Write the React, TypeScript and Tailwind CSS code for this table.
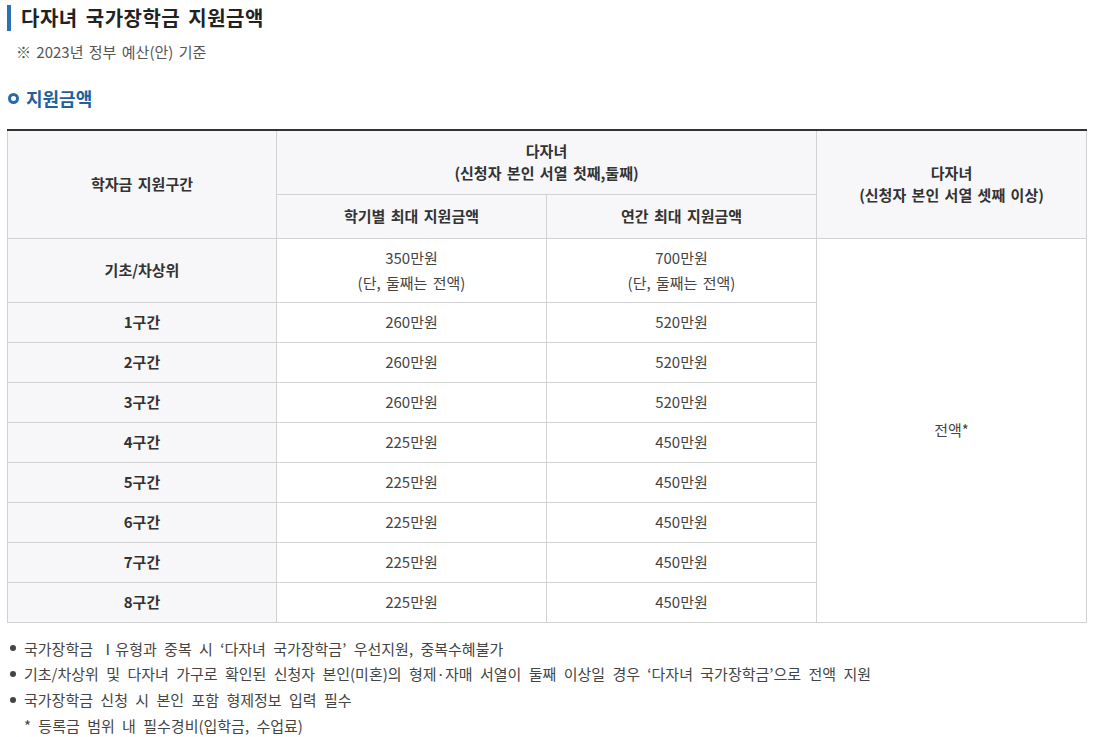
import React from "react";

const rows: [string, string, string][] = [
  ["1구간", "260만원", "520만원"],
  ["2구간", "260만원", "520만원"],
  ["3구간", "260만원", "520만원"],
  ["4구간", "225만원", "450만원"],
  ["5구간", "225만원", "450만원"],
  ["6구간", "225만원", "450만원"],
  ["7구간", "225만원", "450만원"],
  ["8구간", "225만원", "450만원"],
];

const th = "border border-[#d2d2d2] bg-[#f7f7f9] font-bold text-[#333] text-center align-middle";
const td = "border border-[#d2d2d2] text-[#444] text-center align-middle";

export default function App() {
  return (
    <div
      className="bg-white w-[1112px] h-[737px] text-[15px] text-[#333]"
      style={{ fontFamily: '"Noto Sans CJK KR", "Noto Sans", sans-serif' }}
    >
      <div className="pt-[5px] pl-[7px] flex items-center">
        <div className="w-[4px] h-[26px] bg-[#2a72b5]" />
        <h1 className="ml-[10px] text-[20px] font-bold text-[#222] leading-[26px] [word-spacing:3px] tracking-[0.5px]">다자녀 국가장학금 지원금액</h1>
      </div>
      <p className="mt-[11px] ml-[16px] text-[15px] text-[#555] leading-[20px] [word-spacing:2px]">※ 2023년 정부 예산(안) 기준</p>
      <div className="mt-[24px] ml-[8px] flex items-center">
        <span className="w-[11px] h-[11px] rounded-full border-[3px] border-[#2a6aa8]" />
        <span className="ml-[7px] text-[18px] font-bold text-[#23609b] leading-[24px]">지원금액</span>
      </div>
      <div className="mt-[19px] ml-[7px] w-[1080px]">
        <table className="w-full border-collapse table-fixed border-t-2 border-t-[#333] [word-spacing:2px]">
          <colgroup>
            <col className="w-[269px]" />
            <col className="w-[270px]" />
            <col className="w-[270px]" />
            <col className="w-[270px]" />
          </colgroup>
          <tbody>
            <tr className="h-[64px]">
              <td rowSpan={2} className={th + " border-t-0"}>학자금 지원구간</td>
              <td colSpan={2} className={th + " border-t-0 leading-[22px]"}>
                다자녀
                <br />
                (신청자 본인 서열 첫째,둘째)
              </td>
              <td rowSpan={2} className={th + " border-t-0 leading-[22px]"}>
                다자녀
                <br />
                (신청자 본인 서열 셋째 이상)
              </td>
            </tr>
            <tr className="h-[44px]">
              <td className={th}>학기별 최대 지원금액</td>
              <td className={th}>연간 최대 지원금액</td>
            </tr>
            <tr className="h-[64px]">
              <td className={th}>기초/차상위</td>
              <td className={td + " leading-[25px]"}>
                350만원
                <br />
                (단, 둘째는 전액)
              </td>
              <td className={td + " leading-[25px]"}>
                700만원
                <br />
                (단, 둘째는 전액)
              </td>
              <td rowSpan={9} className={td}>전액*</td>
            </tr>
            {rows.map(([a, b, c]) => (
              <tr key={a} className="h-[40px]">
                <td className={th}>{a}</td>
                <td className={td}>{b}</td>
                <td className={td}>{c}</td>
              </tr>
            ))}
          </tbody>
        </table>
      </div>
      <ul className="mt-[13px] ml-[10px] text-[15px] text-[#444] leading-[25.7px] [word-spacing:4px]">
        <li className="flex items-center">
          <span className="w-[6px] h-[6px] rounded-full bg-[#444] mr-[8px]" />
          국가장학금 Ⅰ유형과 중복 시 ‘다자녀 국가장학금’ 우선지원, 중복수혜불가
        </li>
        <li className="flex items-center">
          <span className="w-[6px] h-[6px] rounded-full bg-[#444] mr-[8px]" />
          기초/차상위 및 다자녀 가구로 확인된 신청자 본인(미혼)의 형제·자매 서열이 둘째 이상일 경우 ‘다자녀 국가장학금’으로 전액 지원
        </li>
        <li className="flex items-center">
          <span className="w-[6px] h-[6px] rounded-full bg-[#444] mr-[8px]" />
          국가장학금 신청 시 본인 포함 형제정보 입력 필수
        </li>
        <li className="pl-[14px]">* 등록금 범위 내 필수경비(입학금, 수업료)</li>
      </ul>
    </div>
  );
}
